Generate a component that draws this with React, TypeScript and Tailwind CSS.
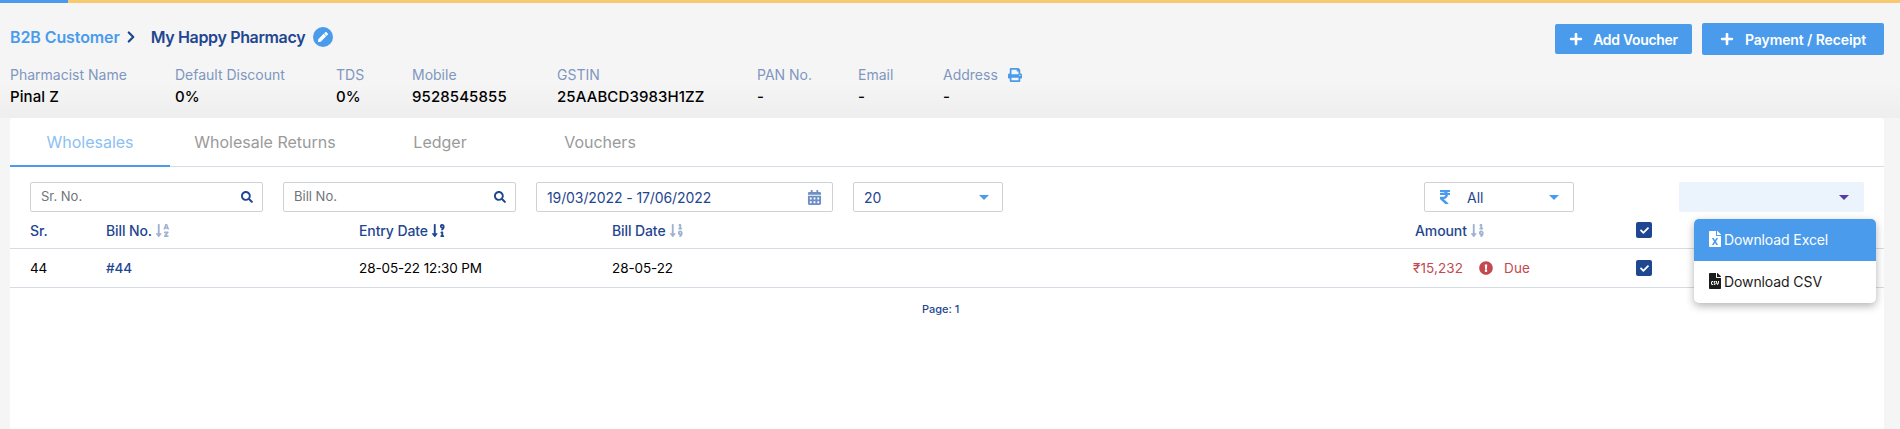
import {
  FaCalendarAlt,
  FaCheck,
  FaExclamationCircle,
  FaFileCsv,
  FaFileExcel,
  FaPen,
  FaPlus,
  FaPrint,
  FaRupeeSign,
  FaSearch,
  FaSortAlphaDown,
  FaSortNumericDown,
  FaSortNumericDownAlt,
} from "react-icons/fa";
import { ChevronRight } from "lucide-react";

const details = [
  { label: "Pharmacist Name", value: "Pinal Z", w: "w-[165px]" },
  { label: "Default Discount", value: "0%", w: "w-[161px]" },
  { label: "TDS", value: "0%", w: "w-[76px]" },
  { label: "Mobile", value: "9528545855", w: "w-[145px]" },
  { label: "GSTIN", value: "25AABCD3983H1ZZ", w: "w-[200px]" },
  { label: "PAN No.", value: "-", w: "w-[101px]" },
  { label: "Email", value: "-", w: "w-[85px]" },
];

function Caret({ className }: { className: string }) {
  return <span className={`h-0 w-0 border-x-[5px] border-t-[5px] border-x-transparent ${className}`} />;
}

function SearchBox({ placeholder }: { placeholder: string }) {
  return (
    <div className="flex h-[30px] w-[233px] items-center justify-between rounded-[2px] border border-[#cfd2d6] pl-[10px] pr-[9px]">
      <span className="text-[13px] text-[#6f7479]">{placeholder}</span>
      <FaSearch className="text-[12px] text-[#1f4690]" />
    </div>
  );
}

function Checkbox() {
  return (
    <span className="flex h-4 w-4 items-center justify-center rounded-[2px] bg-[#1f4690]">
      <FaCheck className="text-[9px] text-white" />
    </span>
  );
}

export default function App() {
  return (
    <div className="flex h-screen flex-col overflow-hidden bg-[#f5f5f5] font-['Inter',sans-serif]">
      <div className="flex h-[3px] shrink-0 bg-[#f8c96f]">
        <div className="w-[68px] bg-[#4a9bec]" />
      </div>

      <div className="flex h-[115px] shrink-0 flex-col bg-gradient-to-b from-[#f5f5f5] from-70% to-[#eeeeee] pl-[10px] pr-4">
        <div className="flex h-[60px] items-start justify-between pt-5">
          <div className="flex h-6 items-center pt-1">
            <span className="text-[16px] font-semibold tracking-[-0.1px] text-[#4a9bec]">B2B Customer</span>
            <ChevronRight size={18} strokeWidth={3} className="ml-[2px] text-[#1f4690]" />
            <span className="ml-[11px] text-[16px] font-semibold tracking-[-0.35px] text-[#1f4690]">My Happy Pharmacy</span>
            <span className="ml-2 flex h-5 w-5 items-center justify-center rounded-full bg-[#4a9bec]">
              <FaPen className="text-[10px] text-white" />
            </span>
          </div>
          <div className="flex items-center gap-[10px]">
            <button className="flex h-[30px] w-[137px] items-center justify-center gap-[10px] rounded-[2px] bg-[#4a9bec] text-[14px] font-semibold tracking-[-0.3px] text-white">
              <FaPlus className="text-[14px]" />
              Add Voucher
            </button>
            <button className="flex h-8 w-[182px] items-center justify-center gap-[11px] rounded-[2px] bg-[#4a9bec] text-[14px] font-semibold tracking-[-0.1px] text-white">
              <FaPlus className="text-[14px]" />
              Payment / Receipt
            </button>
          </div>
        </div>
        <div className="flex">
          {details.map((d) => (
            <div key={d.label} className={d.w}>
              <div className="text-[14px] leading-[24px] text-[#7f97bf]">{d.label}</div>
              <div className="text-[15px] font-medium leading-[20px] tracking-[0.1px] text-black">{d.value}</div>
            </div>
          ))}
          <div>
            <div className="flex items-center gap-[10px] text-[14px] leading-[24px] text-[#7f97bf]">
              Address
              <FaPrint className="text-[14px] text-[#4a9bec]" />
            </div>
            <div className="text-[15px] font-medium leading-[20px] text-black">-</div>
          </div>
        </div>
      </div>

      <div className="relative ml-[10px] mr-4 flex-1 rounded-t-[3px] bg-white">
        <div className="flex h-[49px] border-b border-[#d5dce3] text-[16px]">
          <div className="-mb-px flex w-40 items-center justify-center border-b-2 border-[#4a9bec] text-[#8dc0f2]">Wholesales</div>
          <div className="flex w-[190px] items-center justify-center text-[#9a9a9a]">Wholesale Returns</div>
          <div className="flex w-40 items-center justify-center text-[#9a9a9a]">Ledger</div>
          <div className="flex w-40 items-center justify-center text-[#9a9a9a]">Vouchers</div>
        </div>

        <div className="flex items-center pl-5 pr-5 pt-[15px]">
          <div className="flex gap-5">
            <SearchBox placeholder="Sr. No." />
            <SearchBox placeholder="Bill No." />
            <div className="flex h-[30px] w-[297px] items-center justify-between rounded-[2px] border border-[#cfd2d6] pl-[10px] pr-[10px]">
              <span className="text-[14px] tracking-[-0.1px] text-[#1f4690]">19/03/2022 - 17/06/2022</span>
              <FaCalendarAlt className="text-[15px] text-[#6f8fc4]" />
            </div>
            <div className="flex h-[30px] w-[150px] items-center justify-between rounded-[2px] border border-[#cfd2d6] pl-[10px] pr-[13px]">
              <span className="text-[14px] text-[#1f4690]">20</span>
              <Caret className="border-t-[#4a9bec]" />
            </div>
          </div>
          <div className="ml-[421px] flex h-[30px] w-[150px] items-center rounded-[2px] border border-[#cfd2d6] pl-[12px] pr-[14px]">
            <FaRupeeSign className="text-[16px] text-[#4a9bec]" />
            <span className="ml-[14px] flex-1 text-[14px] text-[#1f4690]">All</span>
            <Caret className="border-t-[#4a9bec]" />
          </div>
          <div className="ml-[105px] flex h-[30px] w-[185px] items-center justify-end rounded-[2px] bg-[#ebf3fd] pr-[15px]">
            <Caret className="border-t-[#5b3aa8]" />
          </div>
        </div>

        <div className="grid h-[37px] grid-cols-[76px_253px_253px_803px_221px_1fr] items-center border-b border-[#d5dce3] pl-5 text-[14px] font-medium tracking-[-0.1px] text-[#1f4690]">
          <span>Sr.</span>
          <span className="flex items-center gap-[3px]">
            Bill No.
            <FaSortAlphaDown className="text-[15px] text-[#9fb2d3]" />
          </span>
          <span className="flex items-center gap-[3px]">
            Entry Date
            <FaSortNumericDownAlt className="text-[15px] text-[#1f4690]" />
          </span>
          <span className="flex items-center gap-[3px]">
            Bill Date
            <FaSortNumericDown className="text-[15px] text-[#9fb2d3]" />
          </span>
          <span className="flex items-center gap-[3px]">
            Amount
            <FaSortNumericDown className="text-[15px] text-[#9fb2d3]" />
          </span>
          <Checkbox />
        </div>

        <div className="grid h-[39px] grid-cols-[76px_253px_253px_803px_221px_1fr] items-center border-b border-[#d5dce3] pl-5 text-[13.5px] tracking-[-0.1px] text-black">
          <span>44</span>
          <span className="font-medium text-[#1f4690]">#44</span>
          <span>28-05-22 12:30 PM</span>
          <span>28-05-22</span>
          <span className="-ml-[2px] flex items-center tracking-[0.1px] text-[#c4484f]">
            ₹15,232
            <FaExclamationCircle className="ml-[16px] text-[14px]" />
            <span className="ml-[11px]">Due</span>
          </span>
          <Checkbox />
        </div>

        <div className="pt-[12px] pl-[912px] text-[11px] font-medium leading-[18px] text-[#1f4690]">Page: 1</div>

        <div className="absolute left-[1684px] top-[101px] w-[182px] overflow-hidden rounded-[5px] bg-white text-[14px] tracking-[-0.1px] shadow-[0_3px_8px_rgba(0,0,0,0.3)]">
          <div className="flex h-[42px] items-center gap-px bg-[#4a9bec] pb-[2px] pl-[13px] text-white">
            <FaFileExcel className="text-[16px]" />
            Download Excel
          </div>
          <div className="flex h-[42px] items-center gap-px pb-[2px] pl-[13px] text-[#1c1c1c]">
            <FaFileCsv className="text-[16px]" />
            Download CSV
          </div>
        </div>
      </div>
    </div>
  );
}
